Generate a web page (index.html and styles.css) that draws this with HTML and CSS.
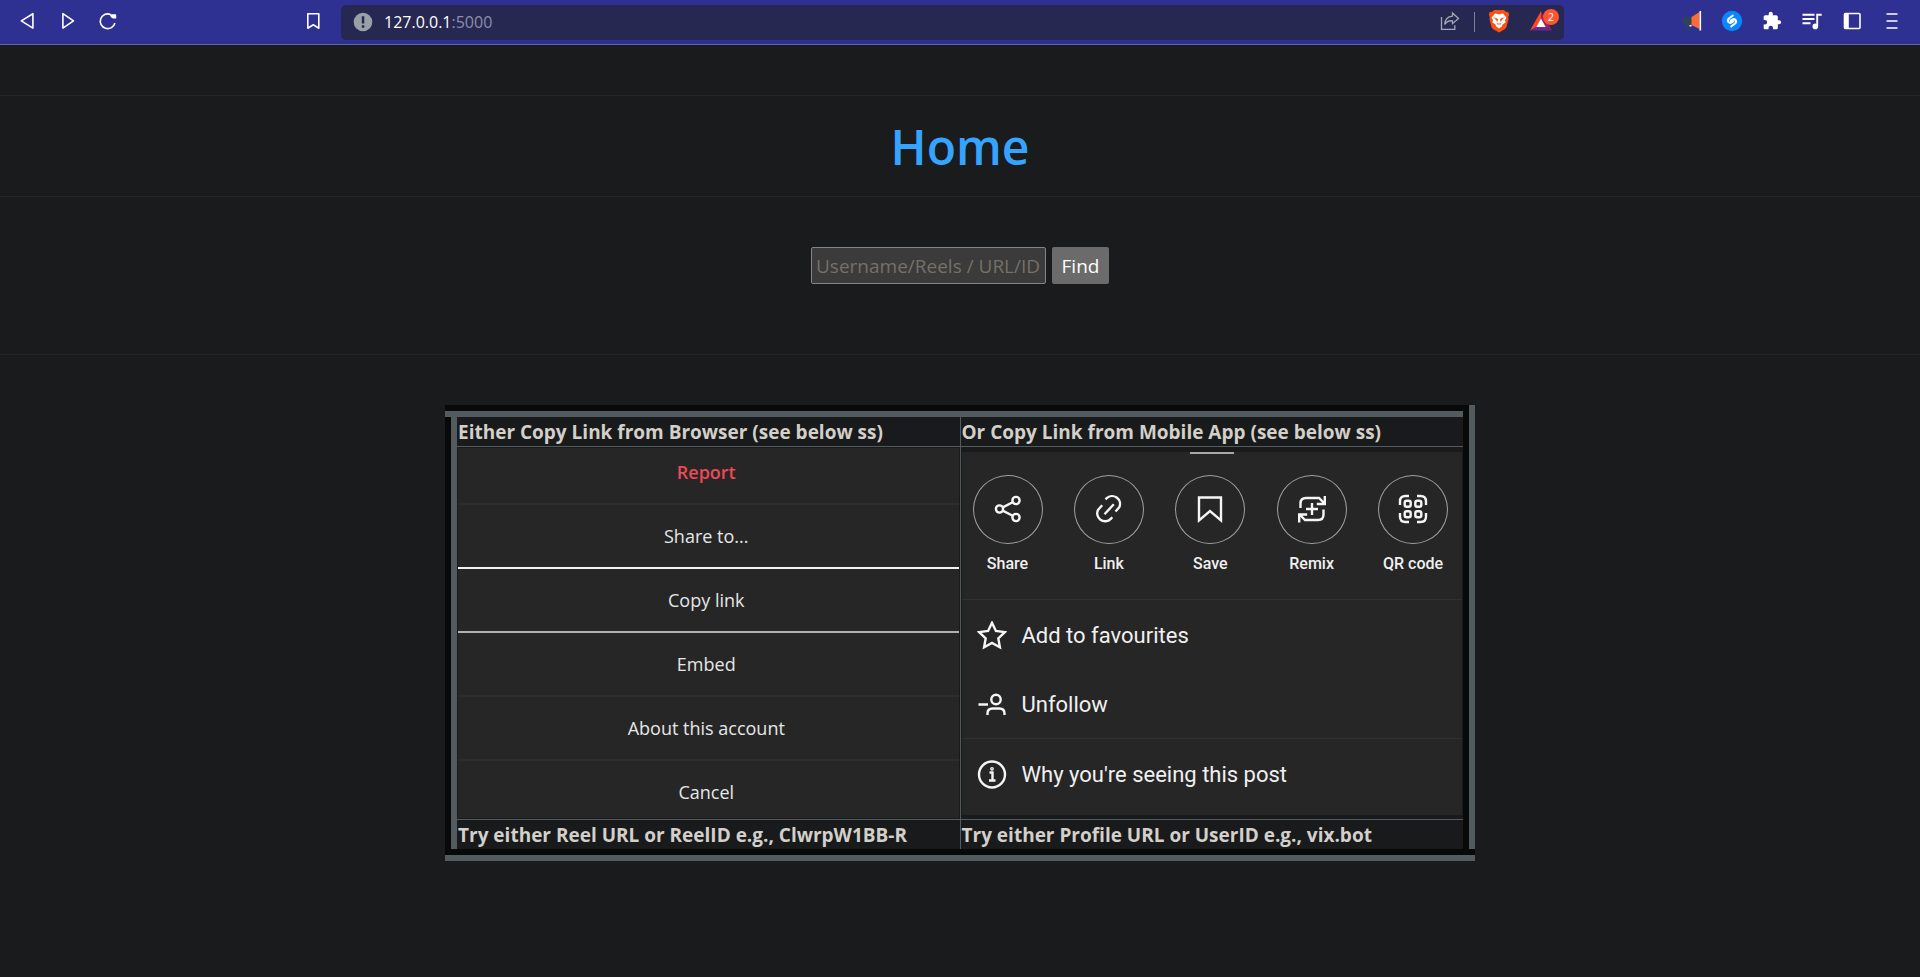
FILE: index.html
```html
<!DOCTYPE html>
<html lang="en">
<head>
<meta charset="utf-8">
<title>Home</title>
<link rel="stylesheet" href="styles.css">
</head>
<body>
<header class="toolbar">
  <nav class="nav">
    <button class="tool" aria-label="Back"><svg width="20" height="20" viewBox="0 0 20 20"><path class="line" d="M14.9 2.7v14.4L3.3 9.9z"/></svg></button>
    <button class="tool" aria-label="Forward"><svg width="20" height="20" viewBox="0 0 20 20"><path class="line" d="M4.9 2.7v14.4l10.6-7.2z"/></svg></button>
    <button class="tool" aria-label="Reload"><svg width="20" height="20" viewBox="0 0 20 20"><path class="line" d="M12.5 3.4A7.4 7.4 0 1 0 16.9 12"/><path class="fill" d="M11.7 3.3h5.500q1.200 0 1 1.400v2.800h-3.100q-2.400-.2-3.400-4.200z"/></svg></button>
    <button class="tool tool-end" aria-label="Bookmark"><svg width="20" height="20" viewBox="0 0 20 20"><path class="line" d="M4.800 2.700h11v14.500l-5.500-3.400-5.500 3.400z"/></svg></button>
  </nav>
  <div class="address">
    <svg class="site" width="20" height="20" viewBox="0 0 20 20"><circle cx="10" cy="10" r="9.300" fill="#9ba0a8"/><path d="M8.800 4.200h2.500v7.400H8.800zM8.800 13.200h2.500v2.500H8.800z" fill="#262851"/></svg>
    <span class="url">127.0.0.1<span class="port">:5000</span></span>
    <button class="tool small" aria-label="Share page"><svg width="20" height="20" viewBox="0 0 20 20" fill="none" stroke="#a5a7b5" stroke-width="1.300"><path d="M1.500 6v12.300h13.300v-4"/><path d="M12.500 2l6 5.500-6 5.200V9.800c-3.500-.3-6 .8-7.800 3.700.3-4.800 3.300-8 7.800-8.300z"/></svg></button>
    <span class="bar"></span>
    <button class="tool small" aria-label="Shields"><svg width="22" height="24" viewBox="0 0 22 24"><path fill="#fb4f14" d="M6 1h10l2 2 2.200-.2 1 3-1 2.200.3 2.500-2 7.500-1.700 2.200L11 23.500l-5.800-3.300L3.500 18l-2-7.500.3-2.500-1-2.200 1-3L4 3z"/><path fill="#fff" d="M7 4.500l4 .7 4-.7 3.500 4.300-1.700 2.700 1 1.700-3.300 2.400-.5 1.600L11 19.500l-3-2.300-.5-1.600-3.300-2.400 1-1.700-1.700-2.700z"/><path fill="#fb4f14" d="M5.500 8.300l3.800 1.100.7 1.100-.7 2.600-1.200-2.200zM16.500 8.300l-3.800 1.100-.7 1.100.7 2.600 1.200-2.200zM8.300 14l2.700.8 2.700-.8-1.500 1.800L11 15.300l-1.200.5z"/></svg></button>
    <button class="tool rewards" aria-label="Rewards, 2 new"><svg width="24" height="22" viewBox="0 0 24 22"><path fill="#ff4724" d="M12 1v8l-4.500 8L1 20.500z"/><path fill="#9e1f63" d="M12 1l11 19.500-6.500-3.500L12 9z"/><path fill="#662d91" d="M1 20.500L7.500 17h9l6.500 3.500z"/><path fill="#fff" d="M12 8.500l4.700 8.500H7.300z"/></svg><span class="badge">2</span></button>
  </div>
  <nav class="extensions">
    <button class="tool" aria-label="Megaphone"><svg width="22" height="22" viewBox="0 0 22 22"><path fill="#2b4557" d="M1.500 8.500q1-1.700 3-1.700h6v8.500H9l-.8 3.200 1 2.500H6.500L5 14.800q-3-.3-3.500-3z"/><path fill="#ff6a35" d="M10.500 7l8-5v17l-8-4z"/><path fill="#fff" d="M8.500 15h2v1.500h-2zM18.500 1h1.600v19.500h-1.600z"/></svg></button>
    <button class="tool" aria-label="Shazam"><svg width="22" height="22" viewBox="0 0 22 22"><circle cx="11" cy="11" r="10.200" fill="#0a86ff"/><path d="M11.800 5.600L8.200 8.200q-2.300 1.900-.7 3.900 1.400 1.500 3.600.1l1.300-1M10.200 16.400l3.600-2.600q2.300-1.900.7-3.900-1.400-1.500-3.600-.1l-1.300 1" fill="none" stroke="#fff" stroke-width="2" stroke-linecap="round"/></svg></button>
    <button class="tool" aria-label="Extensions"><svg width="20" height="20" viewBox="0 0 24 24"><path class="fill" d="M20.500 11H19V7c0-1.100-.9-2-2-2h-4V3.500a2.500 2.500 0 0 0-5 0V5H4c-1.100 0-2 .9-2 2v3.800h1.500a2.700 2.700 0 0 1 0 5.400H2V20c0 1.100.9 2 2 2h3.800v-1.500a2.700 2.700 0 0 1 5.400 0V22H17c1.100 0 2-.9 2-2v-4h1.500a2.500 2.500 0 0 0 0-5z"/></svg></button>
    <button class="tool" aria-label="Media"><svg width="22" height="20" viewBox="0 0 22 20"><path d="M1.500 3.700h12M1.500 8h12M1.500 12.300h8M16.200 15.500V3.800h4.500" fill="none" stroke="#fff" stroke-width="1.900"/><circle cx="14.300" cy="15.400" r="2.800" class="fill"/></svg></button>
    <button class="tool" aria-label="Sidebar"><svg width="20" height="20" viewBox="0 0 20 20"><rect class="line" x="2.500" y="2.500" width="15.500" height="15" rx="1"/><path class="fill" d="M2 2.500h4.800v15H2z"/></svg></button>
    <button class="tool" aria-label="Menu"><svg width="20" height="20" viewBox="0 0 20 20"><path d="M4.500 3h11M4.500 10h11M4.500 17h11" stroke="#fff" stroke-width="1.600"/></svg></button>
  </nav>
</header>
<main>
  <h1 class="title">Home</h1>
  <form class="search">
    <input class="query" type="text" aria-label="Username, reel, URL or ID" placeholder="Username/Reels / URL/ID">
    <button class="find" type="button">Find</button>
  </form>
  <table class="guide">
    <tr>
      <th>Either Copy Link from Browser (see below ss)</th>
      <th>Or Copy Link from Mobile App (see below ss)</th>
    </tr>
    <tr>
      <td>
        <ul class="browser-menu">
          <li class="report">Report</li>
          <li class="share">Share to...</li>
          <li class="copy">Copy link</li>
          <li>Embed</li>
          <li>About this account</li>
          <li class="cancel">Cancel</li>
        </ul>
      </td>
      <td>
        <div class="sheet">
          <div class="handle"></div>
          <ul class="actions">
            <li><span class="ring"><svg width="30" height="30" viewBox="0 0 30 30"><circle cx="6.500" cy="15" r="3.600"/><circle cx="23" cy="6.500" r="3.600"/><circle cx="23" cy="23.500" r="3.600"/><path d="M9.700 13.400l10-5.200M9.700 16.600l10 5.200"/></svg></span>Share</li>
            <li><span class="ring"><svg width="30" height="30" viewBox="0 0 30 30"><path d="M10.500 20.200l9.300-9.900M11.500 5.300l1.200-1.100a7.900 7.900 0 0 1 12.600 9l-3.800 4.300M8.200 11.300l-4 4.300a7.900 7.900 0 0 0 12.600 9.300l1.500-1.600"/></svg></span>Link</li>
            <li><span class="ring"><svg width="30" height="30" viewBox="0 0 30 30"><path d="M4 3.500h22v23l-11-9.500-11 9.500z"/></svg></span>Save</li>
            <li><span class="ring"><svg width="30" height="30" viewBox="0 0 30 30"><path d="M3.500 14V9.500q0-5.500 5.500-5.500h13l5.500 5.500M27.800 2v8h-8M26.500 15.500v5q0 5.500-5.500 5.500H8l-5.300-5.500M2.200 28.500v-8h8M15 9v12M9 15h12"/></svg></span>Remix</li>
            <li><span class="ring"><svg width="30" height="30" viewBox="0 0 30 30"><path d="M2 11V7.500Q2 2 7.500 2H11M19 2h3.500Q28 2 28 7.500V11M28 19v3.500q0 5.500-5.500 5.500H19M11 28H7.500Q2 28 2 22.500V19"/><rect x="6.700" y="6.700" width="6" height="6" rx="2"/><rect x="17.300" y="6.700" width="6" height="6" rx="2"/><rect x="6.700" y="17.300" width="6" height="6" rx="2"/><rect x="17.300" y="17.300" width="6" height="6" rx="2"/></svg></span>QR code</li>
          </ul>
          <ul class="options">
            <li><svg width="30" height="30" viewBox="0 0 30 30"><path d="M15 1.700l3.900 8.200 8.900 1.200-6.500 6.200 1.600 8.900-7.900-4.300-7.900 4.300 1.600-8.900-6.500-6.200 8.900-1.200z"/></svg>Add to favourites</li>
            <li class="unfollow"><svg width="30" height="30" viewBox="0 0 30 30"><path d="M1.500 14.500h9.500M10.500 25v-1.500q0-5 5-5h7q5 0 5 5V25"/><circle cx="19" cy="9.500" r="4.700"/></svg>Unfollow</li>
            <li class="why"><svg width="30" height="30" viewBox="0 0 30 30"><circle cx="15" cy="14.500" r="13"/><path d="M12.500 12.500H15.500v7.500M12 20.500h6.500"/><circle cx="15" cy="8.800" r=".7"/></svg>Why you're seeing this post</li>
          </ul>
        </div>
      </td>
    </tr>
    <tr>
      <th>Try either Reel URL or ReelID e.g., ClwrpW1BB-R</th>
      <th>Try either Profile URL or UserID e.g., vix.bot</th>
    </tr>
  </table>
</main>
</body>
</html>
```

FILE: styles.css
```css
* { box-sizing: border-box; }

body {
  margin: 0;
  background: #1a1b1d;
  color: #d3cfc9;
  font-family: "Open Sans", "Noto Sans", sans-serif;
}

ul { margin: 0; padding: 0; list-style: none; }
button, input { margin: 0; font: inherit; }

/* Browser toolbar */
.toolbar {
  display: flex;
  align-items: center;
  height: 45px;
  padding: 0 8px;
  background: #2e3192;
  border-bottom: 1px solid #6264ac;
}
.nav { display: flex; width: 333px; padding-right: 8px; }
.tool-end { margin-left: auto; }
.extensions { display: flex; margin-left: 108px; }
.tool {
  display: flex;
  align-items: center;
  justify-content: center;
  width: 40px;
  height: 34px;
  padding: 0 0 2px;
  border: 0;
  background: none;
}
.small { width: 24px; }
.line { fill: none; stroke: #fff; stroke-width: 1.6; stroke-linejoin: round; }
.fill { fill: #fff; }
.address {
  display: flex;
  flex: 1;
  align-items: center;
  height: 35px;
  padding-left: 12px;
  border-radius: 5px;
  background: #262851;
}
.url { flex: 1; margin-left: 11px; color: #fff; font-size: 16px; line-height: 20px; }
.port { color: #8d8ea9; }
.bar { width: 1px; height: 20px; margin: 0 12px; background: #7f819a; }
.rewards { position: relative; width: 46px; margin-left: 7px; }
.badge {
  position: absolute;
  top: 4px;
  right: 5px;
  width: 16px;
  height: 16px;
  border-radius: 50%;
  background: #ff5430;
  color: #fff;
  font-size: 11px;
  line-height: 16px;
}

/* Page */
main { padding-top: 50px; }
.title {
  margin: 0;
  padding-top: 2px;
  border: solid #242628;
  border-width: 1px 0;
  color: #36a3ff;
  font-size: 48px;
  font-weight: 600;
  line-height: 98px;
  text-align: center;
}
.search {
  display: flex;
  justify-content: center;
  gap: 6px;
  padding: 50px 0 70px;
  border-bottom: 1px solid #242628;
  font-size: 19px;
}
.query {
  width: 235px;
  height: 37px;
  padding: 0 4px;
  border: 1px solid #858585;
  border-radius: 2px;
  background: #3b3b3b;
  color: #e8e6e3;
}
.query::placeholder { color: #757068; opacity: 1; }
.find {
  width: 57px;
  height: 37px;
  padding: 0;
  border: 0;
  border-radius: 2px;
  background: #6b6b6b;
  color: #fff;
}

/* Instruction table */
.guide {
  width: 1030px;
  max-width: 100%;
  margin: 50px auto;
  border: 12px groove #545b5e;
  border-collapse: collapse;
  background: #181a1b;
}
.guide th, .guide td { border: 1px solid #545b5e; }
.guide th {
  padding: 2px 1px 0;
  font-size: 19px;
  font-weight: 700;
  line-height: 27px;
  text-align: left;
  white-space: nowrap;
}
.guide td { width: 50%; padding: 1px; }

.browser-menu { color: #e6e6e6; font-size: 18px; line-height: 24px; text-align: center; background: #262626; }
.browser-menu li { padding: 19px 4px 19px 0; border-bottom: 2px solid #2d2d2d; }
.browser-menu .report { padding-top: 12px; color: #ed4956; font-weight: 600; }
.browser-menu .share { border-bottom-color: #f2f2f2; }
.browser-menu .copy { border-bottom-color: #b0b0b0; }
.browser-menu .cancel { padding-bottom: 14px; border-bottom: 0; }

.sheet { background: #262626; color: #f0f0f0; font-family: Roboto, sans-serif; }
.sheet svg { fill: none; stroke: #f5f5f5; stroke-width: 2.4; }
.handle { width: 44px; height: 2px; margin: 0 auto; background: #a8a8a8; }
.actions {
  display: flex;
  justify-content: space-between;
  padding: 21px 3px 25px 0;
  border-bottom: 1px solid #303030;
  font-size: 16px;
  font-weight: 500;
  line-height: 20px;
}
.actions li { display: flex; flex-direction: column; align-items: center; gap: 10px; width: 92px; }
.ring { display: flex; align-items: center; justify-content: center; width: 70px; height: 69px; border: 1px solid #a0a0a0; border-radius: 50%; }
.options { font-size: 22px; line-height: 30px; }
.options li { display: flex; align-items: center; gap: 15px; padding: 21px 15px 20px; }
.options .unfollow { padding: 19px 15px 18px; }
.options .why { border-top: 1px solid #303030; padding: 21px 15px 25px; }
```
